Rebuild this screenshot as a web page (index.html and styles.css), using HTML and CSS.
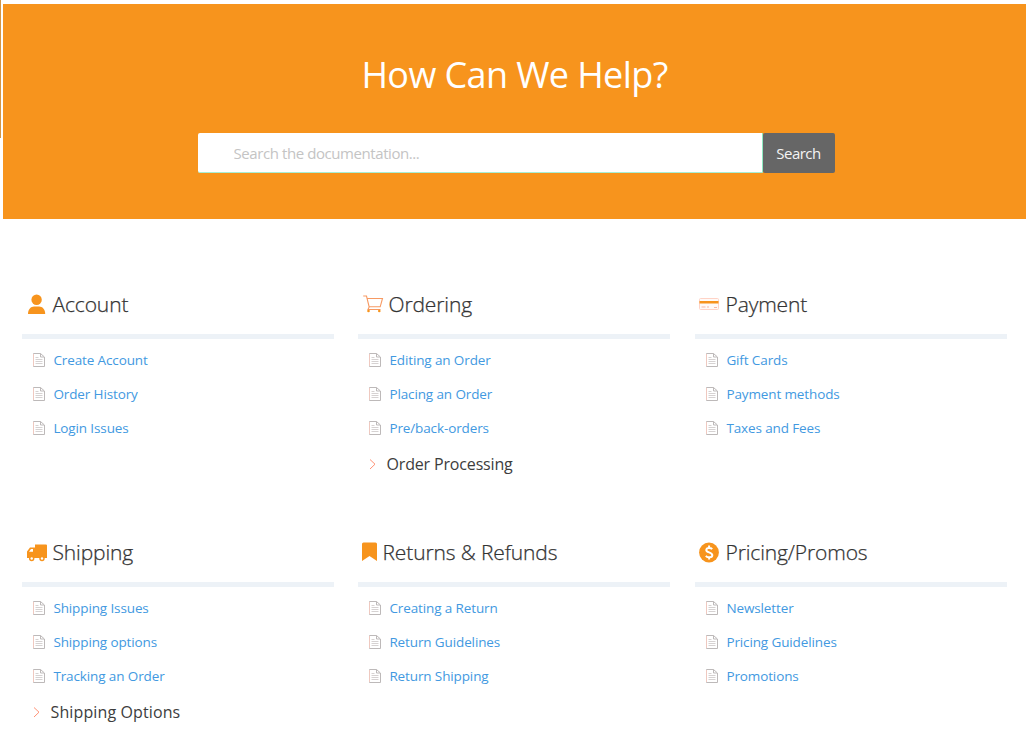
FILE: index.html
```html
<!DOCTYPE html>
<html lang="en">
<head>
<meta charset="utf-8">
<title>How Can We Help?</title>
<link rel="stylesheet" href="styles.css">
</head>
<body>
<svg class="symbols" aria-hidden="true">
  <symbol id="doc" viewBox="0 0 13 16">
    <path d="M1.500 1.500H8.500L12.500 5v9.500h-11z" fill="#fff" stroke="#bdb9b9"/>
    <path d="M8.500 1.500V5H12" fill="none" stroke="#bdb9b9"/>
    <path d="M3.500 5.500h3M3.500 7.500h7M3.500 9.500h7M3.500 11.500h7" stroke="#cbc6c6" stroke-width=".8"/>
    <path d="M1.500 2v12" stroke="#efc9c0"/>
  </symbol>
  <symbol id="chevron" viewBox="0 0 8 12">
    <path d="M1 1.500L6 6.200 1 11" fill="none" stroke="#ff9276"/>
  </symbol>
</svg>
<div class="page">
  <header class="hero">
    <h1 class="hero-title">How Can We Help?</h1>
    <form class="search">
      <input class="search-input" type="text" placeholder="Search the documentation...">
      <button class="search-button" type="button">Search</button>
    </form>
  </header>
  <main class="topics">
    <section class="topic">
      <h2 class="topic-title"><svg class="icon" viewBox="0 0 24 22"><circle cx="10.600" cy="5.700" r="5.200"/><path d="M2 20c0-4.800 3-7.500 6-7.500h5.200c3 0 6 2.700 6 7.500z"/></svg><span>Account</span></h2>
      <ul class="links">
        <li><svg class="doc"><use href="#doc"/></svg><a>Create Account</a></li>
        <li><svg class="doc"><use href="#doc"/></svg><a>Order History</a></li>
        <li><svg class="doc"><use href="#doc"/></svg><a>Login Issues</a></li>
      </ul>
    </section>
    <section class="topic">
      <h2 class="topic-title"><svg class="icon" viewBox="0 0 24 22"><path class="line" d="M1.200 2h3.300L7.300 13.500M5 4.500h15.500L18.200 12.800H7M7.300 12.800L6 15.500h12.500"/><circle cx="6.500" cy="17" r="1.300"/><circle cx="17.300" cy="17" r="1.300"/></svg><span>Ordering</span></h2>
      <ul class="links">
        <li><svg class="doc"><use href="#doc"/></svg><a>Editing an Order</a></li>
        <li><svg class="doc"><use href="#doc"/></svg><a>Placing an Order</a></li>
        <li><svg class="doc"><use href="#doc"/></svg><a>Pre/back-orders</a></li>
      </ul>
      <div class="sub"><svg class="chevron"><use href="#chevron"/></svg><span>Order Processing</span></div>
    </section>
    <section class="topic">
      <h2 class="topic-title"><svg class="icon" viewBox="0 0 24 22"><rect x="0.500" y="4.500" width="19" height="11" rx="1" fill="#fffaf8" stroke="#ffd3c6"/><path d="M.5 7h19v2.500H.5z"/><path class="thin" d="M2.500 13h4M8 13h2M15 13.500h3"/></svg><span>Payment</span></h2>
      <ul class="links">
        <li><svg class="doc"><use href="#doc"/></svg><a>Gift Cards</a></li>
        <li><svg class="doc"><use href="#doc"/></svg><a>Payment methods</a></li>
        <li><svg class="doc"><use href="#doc"/></svg><a>Taxes and Fees</a></li>
      </ul>
    </section>
    <section class="topic">
      <h2 class="topic-title"><svg class="icon" viewBox="0 0 24 22"><path d="M9 2.500h11q1 0 1 1v12.500H1V9.500L4 5.500h5z"/><path d="M3 9.800L5 7h2v2.800z" fill="#fff"/><circle cx="5.700" cy="16.500" r="2.700"/><circle cx="16" cy="16.500" r="2.700"/><circle cx="5.700" cy="16.500" r="1.200" fill="#fff"/><circle cx="16" cy="16.500" r="1.200" fill="#fff"/></svg><span>Shipping</span></h2>
      <ul class="links">
        <li><svg class="doc"><use href="#doc"/></svg><a>Shipping Issues</a></li>
        <li><svg class="doc"><use href="#doc"/></svg><a>Shipping options</a></li>
        <li><svg class="doc"><use href="#doc"/></svg><a>Tracking an Order</a></li>
      </ul>
      <div class="sub sub-wide"><svg class="chevron"><use href="#chevron"/></svg><span>Shipping Options</span></div>
    </section>
    <section class="topic">
      <h2 class="topic-title"><svg class="icon icon-narrow" viewBox="0 0 18 22"><path d="M0 2q0-1.500 1.500-1.500h12Q15 .500 15 2v17l-7.500-5L0 19z"/></svg><span>Returns &amp; Refunds</span></h2>
      <ul class="links">
        <li><svg class="doc"><use href="#doc"/></svg><a>Creating a Return</a></li>
        <li><svg class="doc"><use href="#doc"/></svg><a>Return Guidelines</a></li>
        <li><svg class="doc"><use href="#doc"/></svg><a>Return Shipping</a></li>
      </ul>
    </section>
    <section class="topic">
      <h2 class="topic-title"><svg class="icon" viewBox="0 0 24 22"><circle cx="10" cy="10.500" r="9.900"/><path d="M13.200 7.200C12 5.800 7.500 5.300 7.300 8c-.2 2.800 6 2 6 5.200 0 2.800-4.700 2.600-6.500.6M10.100 3.500v2.800M10.100 14.500v3" fill="none" stroke="#fff" stroke-width="2"/></svg><span>Pricing/Promos</span></h2>
      <ul class="links">
        <li><svg class="doc"><use href="#doc"/></svg><a>Newsletter</a></li>
        <li><svg class="doc"><use href="#doc"/></svg><a>Pricing Guidelines</a></li>
        <li><svg class="doc"><use href="#doc"/></svg><a>Promotions</a></li>
      </ul>
    </section>
  </main>
</div>
</body>
</html>
```
FILE: styles.css
```css
* { box-sizing: border-box; }
body {
  margin: 0;
  background: #fff;
  font-family: "Open Sans", "Noto Sans", sans-serif;
}
.symbols { display: none; }
.page {
  height: 751px;
  padding: 4px 2px 0 3px;
  background: linear-gradient(#d29544, #d29544) no-repeat 0 0 / 1px 138px;
  overflow: hidden;
}
.hero {
  height: 215px;
  padding-top: 46px;
  background: #f7941d;
  display: flex;
  flex-direction: column;
  align-items: center;
}
.hero-title {
  margin: 0 0 33px;
  font-size: 36px;
  line-height: 50px;
  font-weight: 400;
  color: #fff;
  letter-spacing: -0.6px;
}
.search {
  display: flex;
  width: 637px;
  height: 40px;
  margin-left: 3px;
}
.search-input {
  flex: 1;
  min-width: 0;
  border: 0;
  border-right: 1px solid #8eeac1;
  border-bottom: 1px solid #a7efd4;
  border-radius: 2px 0 0 2px;
  padding: 0 36px;
  font: 15px "Open Sans", sans-serif;
  letter-spacing: -0.42px;
}
.search-input::placeholder { color: #c4c4c4; }
.search-button {
  width: 72px;
  border: 0;
  border-radius: 2px;
  padding: 0;
  background: #666;
  color: #f4f4f4;
  font: 15px "Open Sans", sans-serif;
  letter-spacing: -0.5px;
}
.topics {
  display: grid;
  grid-template-columns: 312px 313px 312px;
  grid-auto-rows: 248px;
  column-gap: 24px;
  padding: 71px 0 0 19px;
}
.topic { width: 312px; }
.topic-title {
  display: flex;
  align-items: flex-start;
  height: 49px;
  margin: 0;
  padding-left: 4px;
  border-bottom: 5px solid #edf2f7;
  font-size: 21px;
  line-height: 28px;
  font-weight: 300;
  color: #333;
  letter-spacing: -0.13px;
  -webkit-text-stroke: 0.25px #333;
}
.icon {
  width: 24px;
  height: 22px;
  margin: 4px 2.5px 0 0;
  fill: #f7941d;
}
.icon-narrow { width: 18px; }
.line { fill: none; stroke: #f79a63; stroke-width: 1.1; }
.thin { stroke: #f7b9a5; }
.links {
  list-style: none;
  margin: 0;
  padding: 4px 0 0 10px;
}
.links li {
  display: flex;
  align-items: center;
  height: 34px;
  font-size: 13.5px;
  color: #4299e1;
  letter-spacing: -0.12px;
}
.doc { width: 13px; height: 16px; margin-right: 8.400px; }
.sub {
  display: flex;
  align-items: center;
  height: 38px;
  padding-left: 11px;
  font-size: 16px;
  color: #3d3d3d;
  letter-spacing: -0.16px;
}
.sub-wide { letter-spacing: 0.12px; }
.chevron { width: 8px; height: 12px; margin-right: 9.500px; }
```
